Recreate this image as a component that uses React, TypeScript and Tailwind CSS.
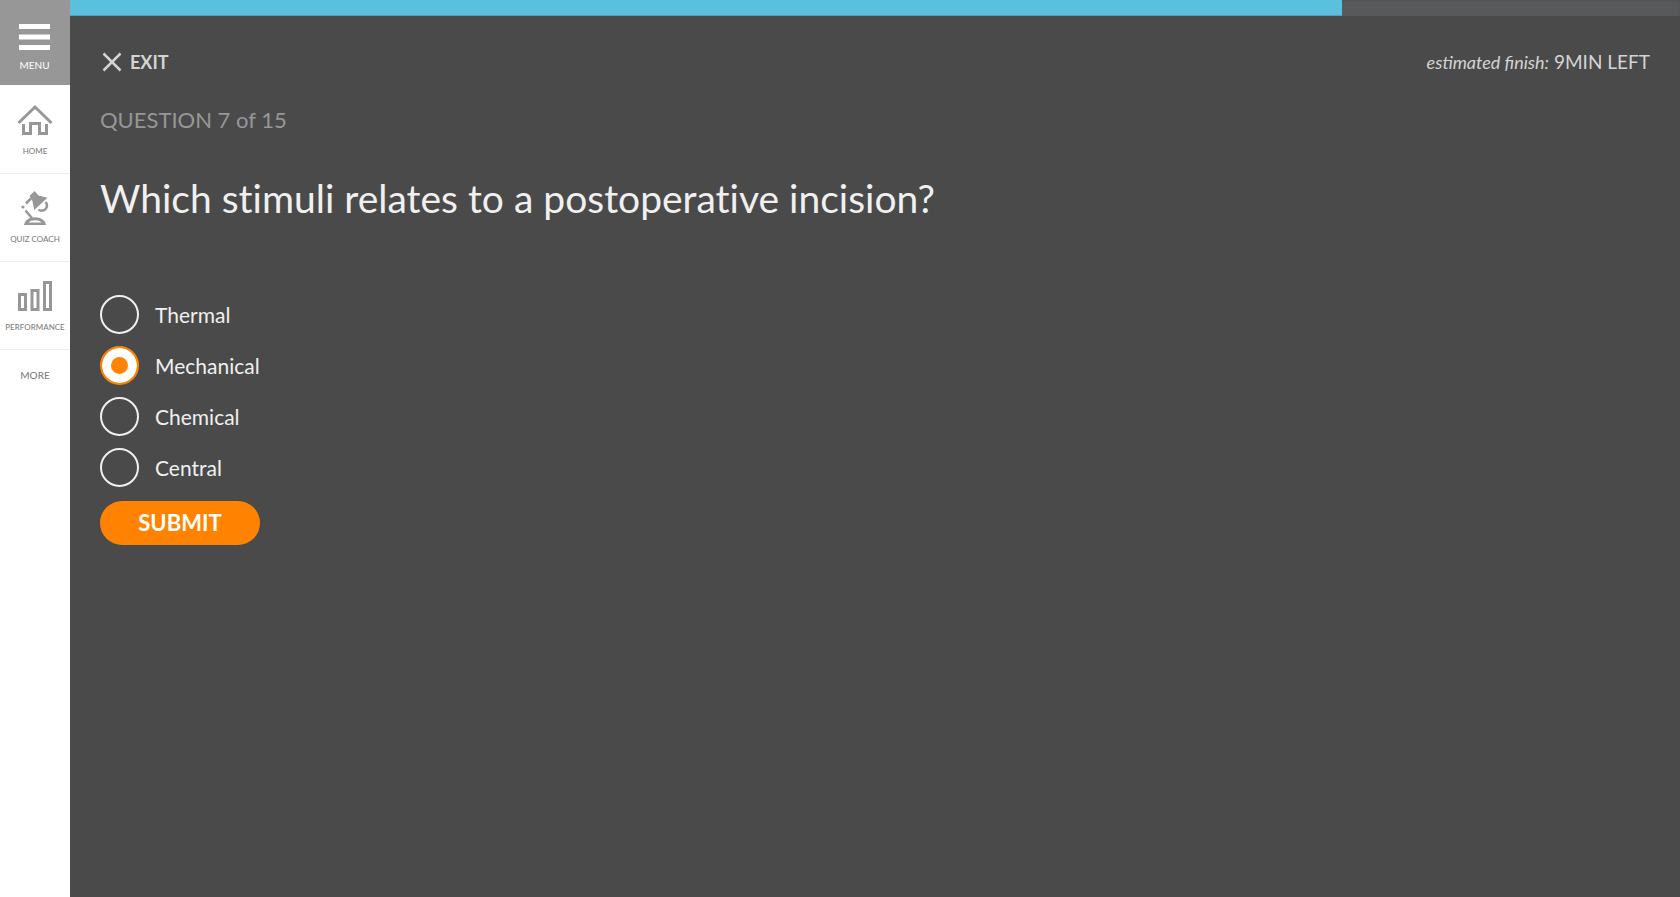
import { useState, type ReactNode } from "react";

const OPTIONS = ["Thermal", "Mechanical", "Chemical", "Central"];

function HomeIcon() {
  return (
    <svg width="36" height="32" viewBox="0 0 36 32" fill="none" stroke="#979797" strokeWidth="3" aria-hidden="true">
      <path d="M1.500 19 18 3l16.500 16" />
      <path d="M6.500 20v9.500h7V19.500h9v10h7V20" />
    </svg>
  );
}

function LampIcon() {
  return (
    <svg width="36" height="36" viewBox="0 0 36 36" fill="none" aria-hidden="true">
      <path d="M12.500 6 17.500 1l4 4.500 9 2.200L17.200 20l-1.700-9z" fill="#979797" />
      <path d="M14 8.500 9 13.500M8.500 20.500l6.500 7.500" stroke="#979797" strokeWidth="2.500" />
      <circle cx="6" cy="17" r="1.600" fill="#979797" />
      <path d="M28.500 12c3 3.500 1 8-3 8.600-1.800.3-3-.1-4-.8" stroke="#979797" strokeWidth="2.500" />
      <path d="M7 35c.5-4.500 5-7.800 11-7.800s10.500 3.300 11 7.800z" fill="#979797" />
      <path d="M11.500 32.500c1.500-1.500 3.500-2.200 6.500-2.200s5 .7 6.500 2.200z" fill="#fff" />
    </svg>
  );
}

function BarsIcon() {
  return (
    <svg width="36" height="32" viewBox="0 0 36 32" fill="none" stroke="#979797" strokeWidth="3" aria-hidden="true">
      <path d="M2.500 14.500h6v15h-6zM15 10.500h6v19h-6zM27.500 2.500h6v27h-6z" />
    </svg>
  );
}

function NavItem({ label, children }: { label: string; children: ReactNode }) {
  return (
    <a href="#" className="flex h-[88px] flex-col items-center justify-between border-b border-[#ececec] py-4 text-[8px] leading-3 font-medium text-[#808080]">
      <span className="flex h-9 items-center">{children}</span>
      {label}
    </a>
  );
}

export default function App() {
  const [answer, setAnswer] = useState("Mechanical");

  return (
    <div className="flex min-h-screen bg-[#4a4a4a] font-['Lato','Open_Sans',sans-serif]">
      <nav className="flex w-[70px] shrink-0 flex-col bg-white">
        <button type="button" className="mb-px flex h-[85px] flex-col items-center bg-[#979797] pt-6 pr-px text-[10px] leading-3 text-white">
          <svg width="31" height="26" viewBox="0 0 31 26" fill="#fff" aria-hidden="true">
            <path d="M0 0h31v5H0zM0 10.500h31v5H0zM0 21h31v5H0z" />
          </svg>
          <span className="mt-[9px]">MENU</span>
        </button>
        <NavItem label="HOME">
          <HomeIcon />
        </NavItem>
        <NavItem label="QUIZ COACH">
          <LampIcon />
        </NavItem>
        <NavItem label="PERFORMANCE">
          <BarsIcon />
        </NavItem>
        <a href="#" className="py-[17px] text-center text-[10px] leading-4 font-medium text-[#808080]">
          MORE
        </a>
      </nav>

      <div className="min-w-0 flex-1">
        <div className="h-4 bg-[#58595b] shadow-[inset_0_1px_2px_rgba(0,0,0,0.1)]">
          <div className="h-full w-[79%] bg-[#5bc0de] shadow-[inset_0_-1px_0_rgba(0,0,0,0.15)]" />
        </div>

        <main className="px-[30px]">
          <header className="flex items-center justify-between pt-8 text-[#d4d4d4]">
            <button type="button" className="flex items-center gap-2 pl-[2px] text-lg leading-7 font-bold">
              <svg width="20" height="20" viewBox="0 0 20 20" stroke="currentColor" strokeWidth="2.500" aria-hidden="true">
                <path d="M1.500 1.500l17 17M18.500 1.500l-17 17" />
              </svg>
              EXIT
            </button>
            <p className="text-[19px] leading-7">
              <em className="text-lg leading-7">estimated finish:</em> 9MIN LEFT
            </p>
          </header>

          <p className="mt-[30px] text-[22px] leading-7 text-[#979797]">QUESTION 7 of 15</p>
          <h1 className="mt-10 text-[39px] leading-[48px] text-[#f0f0f0] [font-variant-ligatures:no-common-ligatures]">
            Which stimuli relates to a postoperative incision?
          </h1>

          <form onSubmit={(e) => e.preventDefault()} className="mt-[73px]">
            <fieldset aria-label="Answer choices" className="flex flex-col items-start gap-3">
              {OPTIONS.map((option) => (
                <label key={option} className="flex items-center gap-4 text-[21px] leading-7 text-[#f0f0f0]">
                  <input
                    type="radio"
                    name="answer"
                    value={option}
                    checked={answer === option}
                    onChange={() => setAnswer(option)}
                    className="size-[39px] shrink-0 appearance-none rounded-full border-2 border-[#f0f0f0] checked:border-[#ff8300] checked:bg-[#ff8300] checked:shadow-[inset_0_0_0_9px_#fff]"
                  />
                  {option}
                </label>
              ))}
            </fieldset>
            <button type="submit" className="mt-[14px] h-11 w-40 rounded-full bg-[#ff8300] text-[22px] leading-7 font-bold text-white">
              SUBMIT
            </button>
          </form>
        </main>
      </div>
    </div>
  );
}
